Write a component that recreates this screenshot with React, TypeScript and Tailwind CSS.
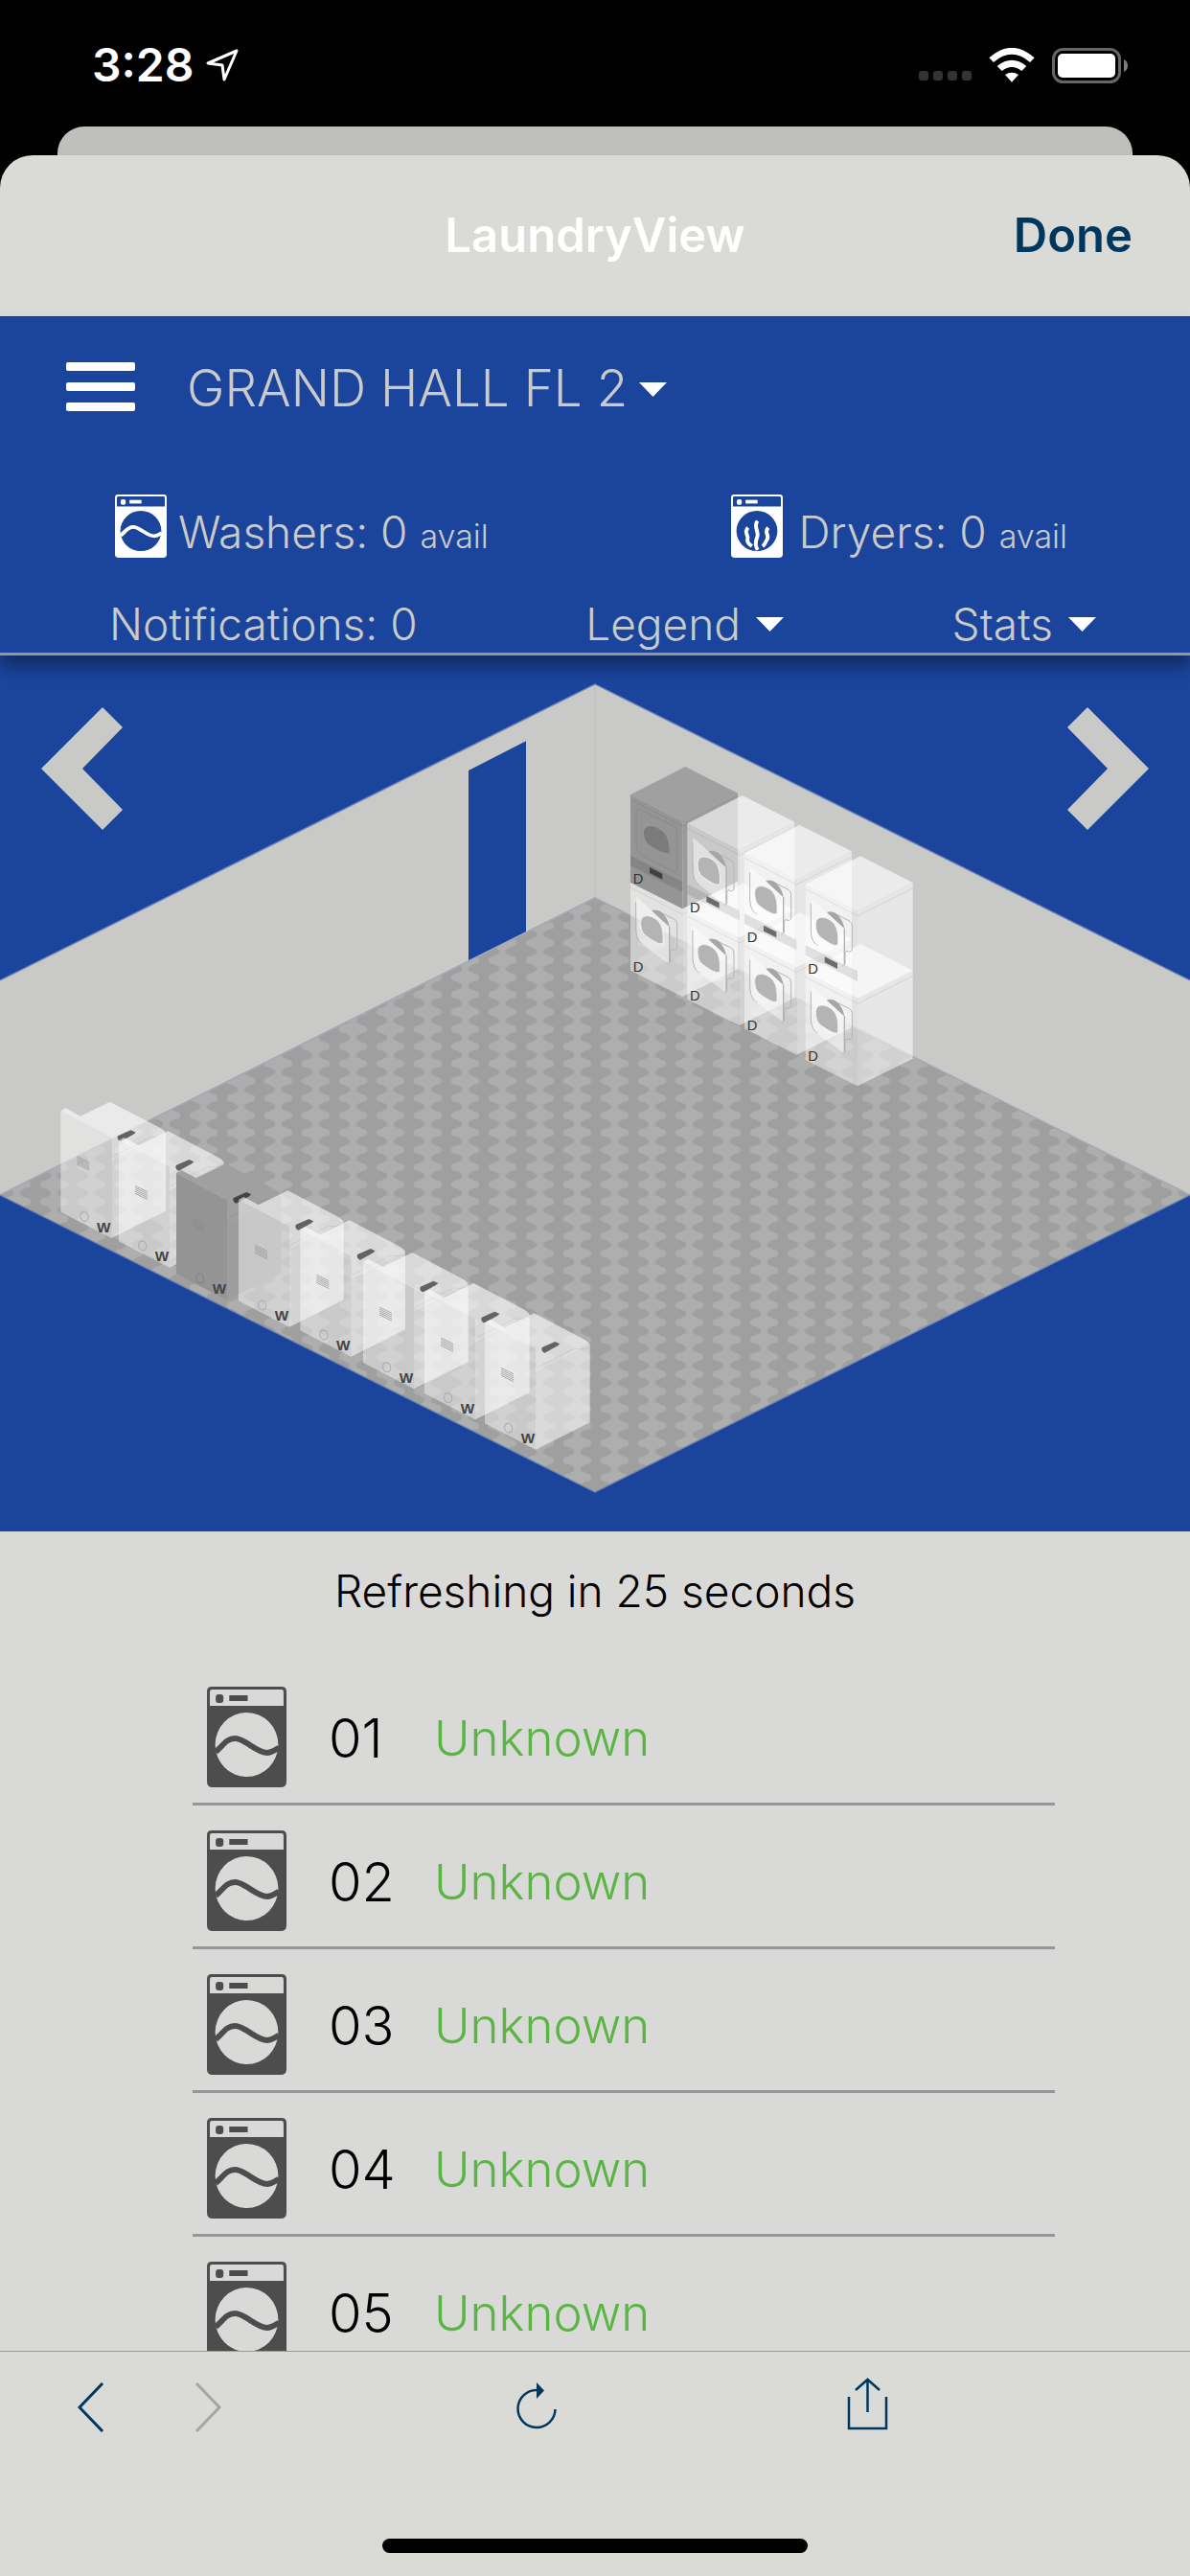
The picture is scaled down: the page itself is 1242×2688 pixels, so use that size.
const machines = ["01", "02", "03", "04", "05"];

const washers = [
  { x: 190, y: 1426, dark: false },
  { x: 372, y: 1518, dark: false },
  { x: 552, y: 1620, dark: true },
  { x: 747, y: 1704, dark: false },
  { x: 940, y: 1797, dark: false },
  { x: 1137, y: 1898, dark: false },
  { x: 1329, y: 1994, dark: false },
  { x: 1518, y: 2088, dark: false },
];

const dryers = [
  { x: 1974, y: 436, dark: true },
  { x: 2152, y: 526, dark: false },
  { x: 2331, y: 618, dark: false },
  { x: 2522, y: 716, dark: false },
];

function MachineIcon({ type, className }: { type: "washer" | "dryer"; className: string }) {
  return (
    <svg viewBox="0 0 82 105" preserveAspectRatio="none" className={className} aria-hidden="true">
      <path
        fill="currentColor"
        fillRule="evenodd"
        d="M5 0H77Q82 0 82 5V99Q82 105 76 105H6Q0 105 0 99V5Q0 0 5 0Z M5 3Q3 3 3 6V20H79V6Q79 3 77 3Z M41 27A32.5 33.5 0 1 0 41 94A32.5 33.5 0 1 0 41 27Z"
      />
      <rect x="9" y="8" width="8" height="9" rx="3" fill="currentColor" />
      <rect x="23" y="9" width="19" height="6" fill="currentColor" />
      {type === "washer" ? (
        <path
          d="M9 68C17 61 20 54 29 54C39 54 51 69 62 69C67 69 70 66 74 64"
          fill="none"
          stroke="currentColor"
          strokeWidth="6"
        />
      ) : (
        <path
          d="M27 55C19 63 29 68 26 75C25 80 29 83 33 86M42 44C34 54 46 62 41 72C38 80 38 85 42 92M59 55C51 63 62 68 57 75C54 80 54 83 50 86"
          fill="none"
          stroke="currentColor"
          strokeWidth="6"
        />
      )}
    </svg>
  );
}

function Caret() {
  return (
    <svg viewBox="0 0 29 15" className="h-[15px] w-[29px] fill-white" aria-hidden="true">
      <path d="M0 0H29L14.5 15Z" />
    </svg>
  );
}

function Washer({ x, y, dark }: { x: number; y: number; dark: boolean }) {
  return (
    <g transform={`translate(${x} ${y})`}>
      <path
        d="M0 0L16 -9L62 16L154 -29L302 48Q326 60 329 70L159 158V84Z"
        fill={dark ? "#a0a0a0" : "#fff"}
        fillOpacity={dark ? 1 : 0.6}
      />
      <path
        d="M159 158L329 70V313L159 398Z"
        fill={dark ? "#9d9d9d" : "#fff"}
        fillOpacity={dark ? 1 : 0.54}
      />
      <path d="M0 0L159 84V398L0 316Z" fill={dark ? "#949494" : "#fff"} fillOpacity={dark ? 1 : 0.44} />
      <path d="M162 142L282 82Q300 86 329 79" fill="none" stroke="#000" strokeOpacity="0.1" strokeWidth="2" />
      <path d="M179 78L220 60L235 67L228 73L188 95Q180 94 178 84Z" fill={dark ? "#444" : "#636363"} />
      <path
        d="M51 142L90 161M51 148L90 167M51 154L90 173M51 160L90 179M51 166L90 185"
        stroke="#8a8a8a"
        strokeWidth="2"
      />
      <ellipse
        cx="74"
        cy="330"
        rx="12"
        ry="15"
        transform="rotate(-15 74 330)"
        fill="none"
        stroke={dark ? "#808080" : "#aaa"}
        strokeWidth="3"
      />
      <text x="135" y="379" textAnchor="middle" fontSize="46" fontWeight="700" fill="#444">
        W
      </text>
    </g>
  );
}

function Dryer({ x, y, dark, upper }: { x: number; y: number; dark: boolean; upper: boolean }) {
  return (
    <g transform={`translate(${x} ${y})`}>
      <path
        d="M0 0L172 -88L336 -5L163 84Z"
        fill={dark ? "#a0a0a0" : "#fff"}
        fillOpacity={dark ? 1 : 0.62}
      />
      <path
        d="M163 84L336 -5V271L163 357Z"
        fill={dark ? "#9b9b9b" : "#fff"}
        fillOpacity={dark ? 1 : 0.52}
      />
      <path d="M0 0L163 84V357L0 275Z" fill={dark ? "#959595" : "#fff"} fillOpacity={dark ? 1 : 0.46} />
      <path d="M0 15L163 99L336 12" fill="none" stroke="#000" strokeOpacity="0.08" strokeWidth="3" />
      {upper && (
        <>
          <path d="M0 190L163 272V304L0 222Z" fill="#000" fillOpacity="0.1" />
          <path d="M60 227L100 247V265L60 245Z" fill={dark ? "#404040" : "#6b6b6b"} />
        </>
      )}
      {dark ? (
        <>
          <path
            d="M26 44L136 98Q146 104 146 116V230Q144 244 134 240L40 192Q18 178 18 150V52Q18 42 26 44Z"
            fill="none"
            stroke="#828282"
            strokeWidth="2"
          />
          <path
            d="M42 118C42 98 66 92 88 106C110 118 122 136 122 182C110 186 90 176 66 162C50 152 42 138 42 118Z"
            fill="#7b7b7b"
          />
        </>
      ) : (
        <>
          <path
            d="M17 60V150Q20 184 40 192M88 90L136 114Q146 118 146 130V205Q140 216 130 208L124 215V250L116 256"
            fill="none"
            stroke="#b5b5b5"
            strokeWidth="3"
          />
          <path d="M66 88C92 76 118 108 122 140Z" fill="#a6a6a6" />
          <path d="M18 44L122 138V252L112 248L40 194Q20 180 20 150Z" fill="#fff" fillOpacity="0.45" />
          <path d="M122 138V250" stroke="#b0b0b0" strokeWidth="4" />
          <path
            d="M32 124C32 100 58 98 80 114C98 128 104 148 102 190C90 196 70 182 50 168C36 158 32 144 32 124Z"
            fill="#b4b4b4"
            stroke="#f5f5f5"
            strokeWidth="3"
          />
        </>
      )}
      <text x="24" y="279" textAnchor="middle" fontSize="44" fill="#333">
        D
      </text>
    </g>
  );
}

function RoomMap() {
  return (
    <svg
      viewBox="0 0 3726 2742"
      className="block h-auto w-full font-['Liberation_Sans_Narrow','Liberation_Sans',sans-serif]"
      role="img"
      aria-label="Laundry room map"
    >
      <defs>
        <pattern id="tiles" x="52" y="792" width="117" height="54" patternUnits="userSpaceOnUse">
          <rect width="117" height="54" fill="#aeaeae" />
          <path
            d="M45 0H73L77 9L93 13L107 22V32L93 40L77 45L73 54H45L41 45L25 40L11 32V22L25 13L41 9Z"
            fill="#9f9f9f"
          />
        </pattern>
      </defs>
      <path d="M0 1017L1863 90L3726 1017V1689L1863 759L0 1689Z" fill="#c9cac8" />
      <path d="M1863 90V759" stroke="#c3c4c2" strokeWidth="6" />
      <path d="M1467 360L1647 268V868L1467 958Z" fill="#1b449c" />
      <path d="M1863 759L3726 1689L1863 2619L0 1689Z" fill="url(#tiles)" />
      <path d="M0 1017L1863 90L3726 1017" fill="none" stroke="#6f84b3" strokeWidth="4" />
      <path d="M0 1689L1863 759L3726 1689" fill="none" stroke="#a3a9b8" strokeWidth="5" />
      <path d="M0 1689L1863 2619L3726 1689" fill="none" stroke="#6f84b3" strokeWidth="4" />
      {dryers.map((d) => (
        <g key={d.x}>
          <Dryer x={d.x} y={d.y + 275} dark={false} upper={false} />
          <Dryer x={d.x} y={d.y} dark={d.dark} upper />
        </g>
      ))}
      {washers.map((w) => (
        <Washer key={w.x} {...w} />
      ))}
    </svg>
  );
}

function StatusBar() {
  return (
    <div className="flex h-[132px] shrink-0 items-center justify-between pt-1 pr-16 pl-24">
      <div className="flex items-center gap-3">
        <span className="text-[48px] font-semibold text-white">3:28</span>
        <svg viewBox="0 0 36 36" className="size-9" aria-hidden="true">
          <path d="M33 3L3 16L18 18L20 33Z" fill="none" stroke="#fff" strokeWidth="3" strokeLinejoin="round" />
        </svg>
      </div>
      <div className="flex items-center gap-[18px]">
        <div className="flex gap-[5px] pt-[22px]">
          <span className="size-[10px] rounded-[3px] bg-[#333]" />
          <span className="size-[10px] rounded-[3px] bg-[#333]" />
          <span className="size-[10px] rounded-[3px] bg-[#333]" />
          <span className="size-[10px] rounded-[3px] bg-[#333]" />
        </div>
        <svg viewBox="0 0 144 108" className="h-9 w-12" aria-hidden="true">
          <path d="M1 31Q72 -32 143 31L129 45Q72 -4 15 45Z" fill="#fff" />
          <path d="M26 57Q72 20 118 57L103 72Q72 48 41 72Z" fill="#fff" />
          <path d="M51 84Q72 70 93 84L72 107Z" fill="#fff" />
        </svg>
        <svg viewBox="0 0 80 37" className="h-[37px] w-20" aria-hidden="true">
          <rect x="1.5" y="1.5" width="69" height="34" rx="10" fill="none" stroke="#666" strokeWidth="3" />
          <rect x="6" y="6" width="60" height="25" rx="5" fill="#fff" />
          <path d="M75 12Q79 14 79 18.5Q79 23 75 25Z" fill="#7f7f7f" />
        </svg>
      </div>
    </div>
  );
}

export default function App() {
  return (
    <div className="flex h-screen flex-col bg-black font-['Inter',sans-serif]">
      <StatusBar />
      <div className="mx-[60px] h-[30px] shrink-0 rounded-t-[28px] bg-[#bfc0bb]" />

      <header className="grid h-[168px] shrink-0 grid-cols-3 items-center rounded-t-[34px] bg-[#dadbd6] px-[60px]">
        <h1 className="col-start-2 text-center text-[49px] font-semibold text-white">LaundryView</h1>
        <button className="justify-self-end text-[49px] font-semibold text-[#00375f]">Done</button>
      </header>

      <nav className="relative z-10 shrink-0 border-t border-b-[3px] border-t-[#16357c] border-b-[#929599] bg-[#1b449c] font-light text-[#cacac8] shadow-[0_12px_16px_0_rgba(0,0,0,0.35)]">
        <div className="flex h-[150px] items-center gap-[54px] pl-[69px]">
          <button aria-label="Menu" className="flex flex-col gap-3 pb-1.5">
            <span className="h-[9px] w-[72px] rounded-xs bg-white" />
            <span className="h-[9px] w-[72px] rounded-xs bg-white" />
            <span className="h-[9px] w-[72px] rounded-xs bg-white" />
          </button>
          <button className="flex items-center gap-3 text-[53px]">
            GRAND HALL FL 2
            <Caret />
          </button>
        </div>
        <div className="flex h-[130px] items-center justify-between pt-[6px] pr-[128px] pl-[120px] text-[46px]">
          <div className="flex items-end gap-3">
            <MachineIcon type="washer" className="h-[66px] w-[54px] text-white" />
            <p className="leading-[44px]">
              Washers: 0 <span className="text-[34px]">avail</span>
            </p>
          </div>
          <div className="flex items-end gap-4">
            <MachineIcon type="dryer" className="h-[66px] w-[54px] text-white" />
            <p className="leading-[44px]">
              Dryers: 0 <span className="text-[34px]">avail</span>
            </p>
          </div>
        </div>
        <div className="flex h-[70px] items-center justify-between pt-2.5 pr-[98px] pl-[114px] text-[46px]">
          <button>Notifications: 0</button>
          <button className="flex items-center gap-4">
            Legend
            <Caret />
          </button>
          <button className="flex items-center gap-4">
            Stats
            <Caret />
          </button>
        </div>
      </nav>

      <section className="relative shrink-0 bg-[#1b449c]">
        <RoomMap />
        <button aria-label="Previous view" className="absolute top-[54px] left-[43px]">
          <svg viewBox="0 0 86 128" className="h-32 w-[86px] fill-[#c9cac8]">
            <path d="M64 0L85 21L43 64L85 107L64 128L0 64Z" />
          </svg>
        </button>
        <button aria-label="Next view" className="absolute top-[54px] right-[43px]">
          <svg viewBox="0 0 86 128" className="h-32 w-[86px] fill-[#c9cac8]">
            <path d="M22 0L1 21L43 64L1 107L22 128L86 64Z" />
          </svg>
        </button>
      </section>

      <main className="min-h-0 flex-1 overflow-hidden bg-[#d9d9d7] font-light text-black">
        <p className="pt-8 pb-11 text-center text-[46px] leading-[60px]">Refreshing in 25 seconds</p>
        <ul className="mr-[141px] ml-[201px]">
          {machines.map((id) => (
            <li key={id} className="flex h-[150px] items-center border-b-[3px] border-[#929899] pt-[9px] pl-[15px]">
              <MachineIcon type="washer" className="h-[105px] w-[83px] text-[#4d4d4d]" />
              <span className="ml-11 w-[110px] pt-1 text-[56px]">{id}</span>
              <span className="pt-1 text-[51px] text-[#5bb545]">Unknown</span>
            </li>
          ))}
        </ul>
      </main>

      <footer className="flex h-[235px] shrink-0 flex-col justify-between border-t border-[#999a98] bg-[#dadbd6] pb-6">
        <div className="flex h-[116px] items-center pl-[81px] text-[#00375f]">
          <button aria-label="Back">
            <svg viewBox="0 0 28 52" className="h-[52px] w-7" fill="none" stroke="currentColor" strokeWidth="3">
              <path d="M26 1L2 26L26 51" />
            </svg>
          </button>
          <button aria-label="Forward" disabled className="ml-[94px] text-[#a3a5a0]">
            <svg viewBox="0 0 28 52" className="h-[52px] w-7" fill="none" stroke="currentColor" strokeWidth="3">
              <path d="M2 1L26 26L2 51" />
            </svg>
          </button>
          <button aria-label="Reload" className="ml-[307px]">
            <svg viewBox="0 0 46 54" className="h-[54px] w-[46px]" fill="none" stroke="currentColor" strokeWidth="2.5">
              <path d="M22 9A19.5 19.5 0 1 0 41.5 29" />
              <path d="M22 1L30 9.500L22 18Z" fill="currentColor" stroke="none" />
            </svg>
          </button>
          <button aria-label="Share" className="ml-[300px] pb-2">
            <svg viewBox="0 0 44 58" className="h-[58px] w-11" fill="none" stroke="currentColor" strokeWidth="2.5">
              <path d="M2 22V55H41V22M21.5 38V4M9 15L21.5 4L34 15" />
            </svg>
          </button>
        </div>
        <div className="mx-auto h-[15px] w-[444px] rounded-full bg-black" />
      </footer>
    </div>
  );
}
